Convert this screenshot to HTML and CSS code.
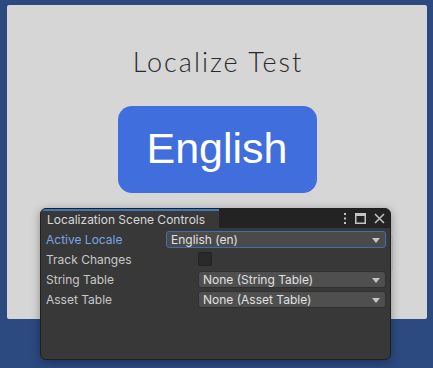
FILE: index.html
```html
<!DOCTYPE html>
<html lang="en">
<head>
    <meta charset="UTF-8">
    <title>Localize Test</title>
    <link rel="stylesheet" href="styles.css">
</head>
<body>
    <div class="game-view">
        <div class="canvas">
            <h1 class="title">Localize Test</h1>
            <button class="lang-btn">English</button>
        </div>
        <div class="ghost-edge"></div>
    </div>

    <div class="editor-window">
        <div class="tab-bar">
            <div class="tab">Localization Scene Controls</div>
            <div class="tab-icons">
                <svg width="4" height="11" viewBox="0 0 4 11"><rect x="1" y="0" width="2" height="2" fill="#c4c4c4"/><rect x="1" y="4.5" width="2" height="2" fill="#c4c4c4"/><rect x="1" y="9" width="2" height="2" fill="#c4c4c4"/></svg>
                <svg width="11" height="11" viewBox="0 0 11 11"><rect x="0.75" y="0.75" width="9.5" height="9.5" fill="none" stroke="#c4c4c4" stroke-width="1.5"/><rect x="0.5" y="0.5" width="10" height="2.5" fill="#c4c4c4"/></svg>
                <svg width="11" height="11" viewBox="0 0 11 11"><path d="M1 1 L10 10 M10 1 L1 10" stroke="#c4c4c4" stroke-width="1.5"/></svg>
            </div>
        </div>
        <div class="window-body">
            <div class="row">
                <span class="label active">Active Locale</span>
                <div class="field wide focused">English (en)<span class="arrow"></span></div>
            </div>
            <div class="row">
                <span class="label">Track Changes</span>
                <span class="checkbox"></span>
            </div>
            <div class="row">
                <span class="label">String Table</span>
                <div class="field">None (String Table)<span class="arrow"></span></div>
            </div>
            <div class="row">
                <span class="label">Asset Table</span>
                <div class="field">None (Asset Table)<span class="arrow"></span></div>
            </div>
        </div>
    </div>
</body>
</html>
```

FILE: styles.css
```css
* {
    margin: 0;
    padding: 0;
    box-sizing: border-box;
}

body {
    width: 433px;
    height: 368px;
    overflow: hidden;
    background: #2c4a7f;
    font-family: Inter, "Noto Sans", sans-serif;
    position: relative;
}

.game-view {
    padding: 5px 6px 0 7px;
}

.canvas {
    height: 314px;
    background: #d6d6d6;
    border-radius: 2px;
    display: flex;
    flex-direction: column;
    align-items: center;
}

.title {
    margin-top: 40px;
    margin-left: 2px;
    height: 34px;
    font-family: Lato, sans-serif;
    font-weight: 300;
    font-size: 27px;
    letter-spacing: 2px;
    color: #2a2a2a;
}

.lang-btn {
    margin-top: 27px;
    width: 199px;
    height: 87px;
    background: #416edd;
    border: none;
    border-radius: 14px;
    color: #fff;
    font-family: "Liberation Sans", Arial, sans-serif;
    font-size: 43px;
    padding-bottom: 2px;
}

.ghost-edge {
    position: absolute;
    left: 384px;
    top: 236px;
    width: 9px;
    height: 35px;
    border: 1px solid #c9c9c9;
    border-left: none;
    border-radius: 0 3px 3px 0;
}

.editor-window {
    position: absolute;
    left: 40px;
    top: 208px;
    width: 351px;
    height: 152px;
    background: #383838;
    border: 1px solid #1f1f1f;
    border-radius: 6px;
    overflow: hidden;
    box-shadow: 0 2px 10px rgba(0, 0, 0, 0.35);
    font-size: 12px;
    color: #d2d2d2;
}

.tab-bar {
    height: 19px;
    background: #232323;
    display: flex;
    align-items: stretch;
    justify-content: space-between;
}

.tab {
    width: 178px;
    background: #383838;
    border-top: 2px solid #3b78c0;
    padding-left: 6px;
    line-height: 17px;
    font-size: 12px;
    color: #d8d8d8;
}

.tab-icons {
    display: flex;
    align-items: center;
    gap: 8px;
    padding-right: 5px;
}

.window-body {
    padding: 1px 4px 0 5px;
}

.row {
    height: 20px;
    display: flex;
    align-items: center;
}

.label {
    width: 152px;
    flex-shrink: 0;
    color: #c8c8c8;
}

.label.active {
    width: 120px;
    color: #7aa4e4;
}

.field {
    flex: 1;
    height: 17px;
    background: #4f4f4f;
    border: 1px solid #303030;
    border-radius: 3px;
    padding-left: 4px;
    line-height: 15px;
    color: #e0e0e0;
    position: relative;
}

.field.focused {
    background: #4a4a4a;
    border-color: #3f6ea8;
}

.arrow {
    position: absolute;
    right: 5px;
    top: 6px;
    border-left: 4px solid transparent;
    border-right: 4px solid transparent;
    border-top: 5px solid #c4c4c4;
}

.checkbox {
    width: 14px;
    height: 14px;
    background: #2a2a2a;
    border: 1px solid #232323;
    border-radius: 2px;
}
```
